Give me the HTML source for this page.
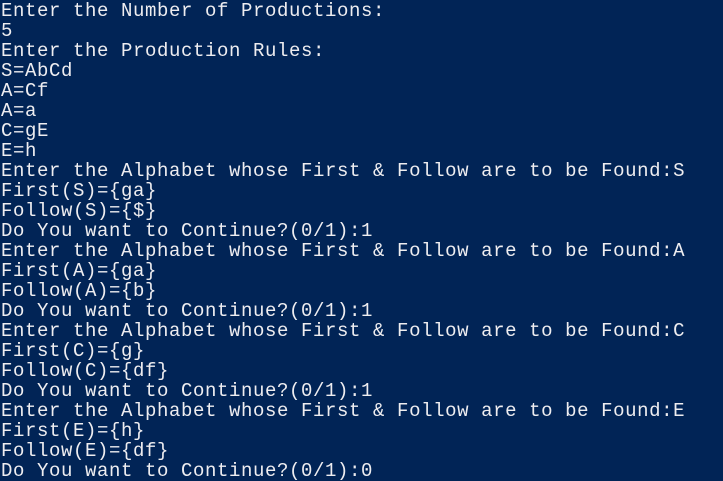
<!DOCTYPE html>
<html><head><style>
html,body{margin:0;padding:0;background:#012456;width:723px;height:481px;overflow:hidden}
pre{margin:0;padding:1px 0 0 1px;font-family:"Liberation Mono",monospace;font-size:19px;letter-spacing:0.6px;line-height:20px;color:#eeedf0}
</style></head><body><pre>Enter the Number of Productions:
5
Enter the Production Rules:
S=AbCd
A=Cf
A=a
C=gE
E=h
Enter the Alphabet whose First &amp; Follow are to be Found:S
First(S)={ga}
Follow(S)={$}
Do You want to Continue?(0/1):1
Enter the Alphabet whose First &amp; Follow are to be Found:A
First(A)={ga}
Follow(A)={b}
Do You want to Continue?(0/1):1
Enter the Alphabet whose First &amp; Follow are to be Found:C
First(C)={g}
Follow(C)={df}
Do You want to Continue?(0/1):1
Enter the Alphabet whose First &amp; Follow are to be Found:E
First(E)={h}
Follow(E)={df}
Do You want to Continue?(0/1):0</pre></body></html>
